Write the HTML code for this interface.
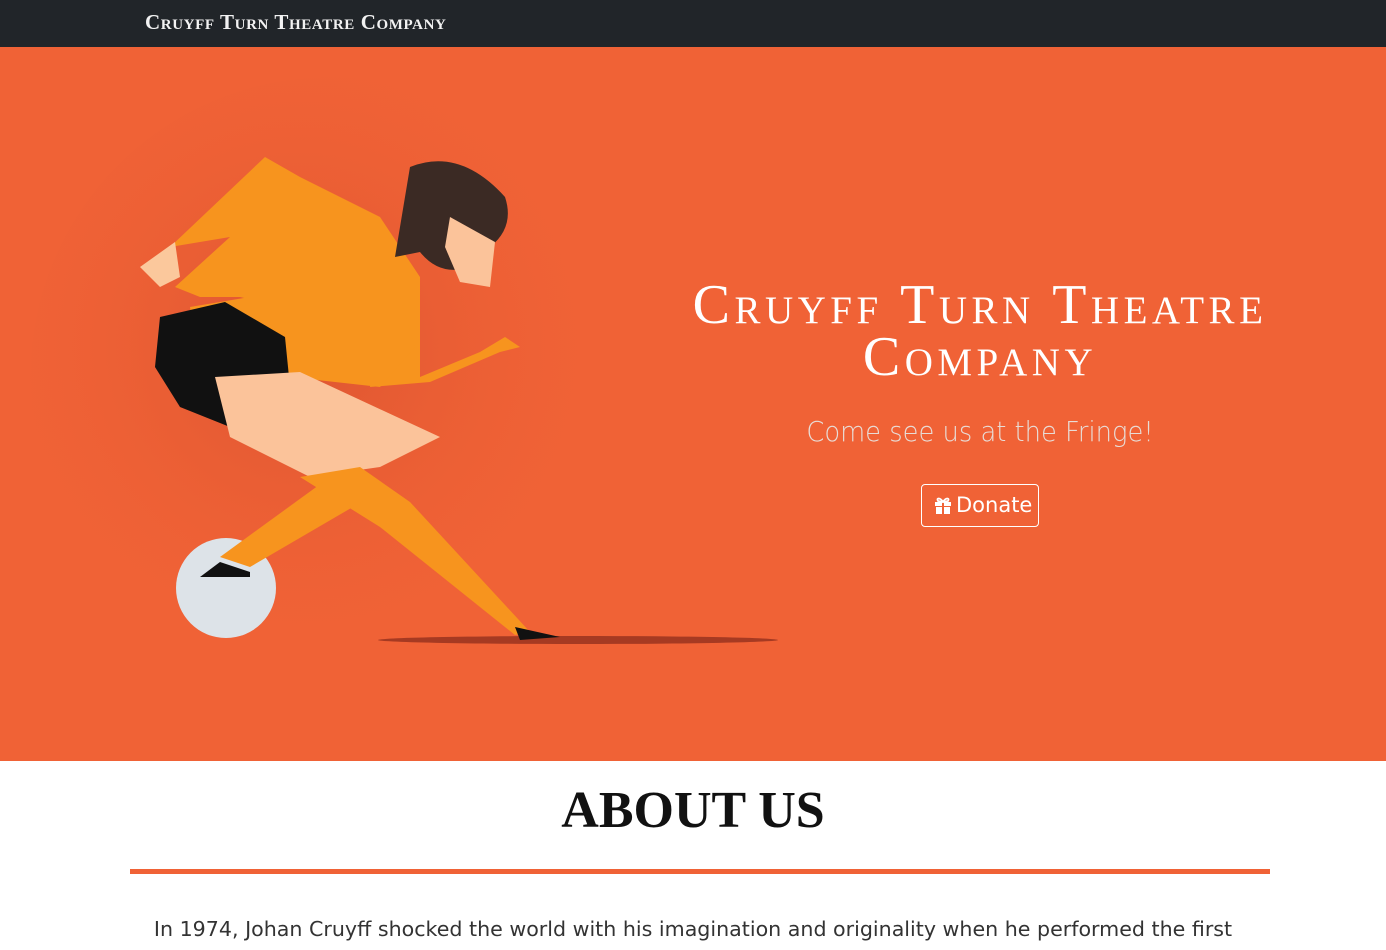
<!DOCTYPE html>
<html><head><meta charset="utf-8"><style>
*{margin:0;padding:0;box-sizing:border-box}
body{width:1386px;height:950px;overflow:hidden;background:#fff;font-family:"Liberation Sans",sans-serif}
.nav{height:47px;background:#212529;position:relative}
.nav span{position:absolute;left:145px;top:10px;color:#f2f2f2;font-family:"Liberation Serif",serif;font-variant:small-caps;font-size:21px;font-weight:bold;letter-spacing:0.6px;white-space:nowrap}
.hero{position:relative;height:714px;background:#f06236;overflow:hidden}
.hero svg.ill{position:absolute;left:0;top:0}
h1{position:absolute;left:630px;width:700px;top:232px;text-align:center;color:#fff;font-family:"Liberation Serif",serif;font-variant:small-caps;font-weight:normal;font-size:56px;line-height:52px;letter-spacing:4.5px}
.sub{position:absolute;left:660px;width:640px;top:368px;text-align:center;color:#e8dcd6;font-size:28px;font-family:"DejaVu Sans","Liberation Sans",sans-serif;font-weight:300;transform:scaleX(0.92)}
.btn{position:absolute;left:921px;top:437px;width:118px;height:43px;border:1px solid #fff;border-radius:4px;color:#fff;font-size:21px;line-height:41px;font-family:"DejaVu Sans","Liberation Sans",sans-serif;padding-left:12px;white-space:nowrap}
.btn svg{vertical-align:-2px;margin-right:4px}
h2{text-align:center;font-family:"Liberation Serif",serif;font-size:52px;font-weight:bold;margin-top:22px;letter-spacing:0;color:#111;line-height:56px}
.rule{margin:30px 116px 0 130px;height:5px;background:#f06236}
p{text-align:center;font-size:20.6px;color:#333;margin-top:43px;font-family:"DejaVu Sans",sans-serif;white-space:nowrap}
</style></head><body>
<div class="nav"><span>Cruyff Turn Theatre Company</span></div>
<div class="hero">
<svg class="ill" width="800" height="714" viewBox="0 0 800 714">
<defs><radialGradient id="g" cx="0.45" cy="0.45" r="0.55"><stop offset="0" stop-color="#c9482a" stop-opacity="0.5"/><stop offset="1" stop-color="#f06236" stop-opacity="0"/></radialGradient></defs>
<ellipse cx="330" cy="330" rx="300" ry="300" fill="url(#g)"/>
<ellipse cx="578" cy="593" rx="200" ry="4" fill="#a63a22"/>
<circle cx="226" cy="541" r="50" fill="#dde3e8"/>
<path d="M170 200 L265 110 L300 130 L380 170 L420 230 L420 330 L480 305 L505 290 L520 300 L500 305 L430 335 L370 340 L380 280 L325 270 L240 250 L200 250 L175 240 L230 190 Z" fill="#f7941e"/>
<path d="M140 220 L175 195 L180 230 L160 240 Z" fill="#fbc89c"/>
<path d="M190 260 L280 245 L400 250 L415 300 L380 340 L200 320 Z" fill="#f7941e"/>
<path d="M160 270 L225 255 L285 290 L290 340 L230 380 L180 360 L155 320 Z" fill="#111"/>
<path d="M215 330 L300 325 L440 390 L380 420 L310 430 L230 390 Z" fill="#fbc39a"/>
<path d="M300 430 L360 420 L410 455 L530 585 L515 588 L380 480 Z" fill="#f7941e"/>
<path d="M220 510 L330 430 L370 450 L250 520 Z" fill="#f7941e"/>
<path d="M200 530 L220 515 L250 525 L250 530 L205 530 Z" fill="#111"/>
<path d="M515 580 L560 590 L520 593 Z" fill="#111"/>
<path d="M410 120 Q460 100 505 150 Q515 180 490 200 L470 220 Q440 230 420 205 L395 210 Z" fill="#3b2a24"/>
<path d="M450 170 L495 195 L490 240 L460 235 L445 200 Z" fill="#fbc39a"/>
</svg>
<h1>Cruyff Turn Theatre<br>Company</h1>
<div class="sub">Come see us at the Fringe!</div>
<div class="btn"><svg width="18" height="17" viewBox="0 0 18 17"><path d="M1 5h16v4H1z M2 10h14v7H2z" fill="#fff"/><rect x="8" y="5" width="2" height="12" fill="#f06236"/><path d="M9 5 C6 0 2 1 4 4 Z M9 5 C12 0 16 1 14 4 Z" fill="none" stroke="#fff" stroke-width="1.8"/></svg>Donate</div>
</div>
<h2>ABOUT US</h2>
<div class="rule"></div>
<p>In 1974, Johan Cruyff shocked the world with his imagination and originality when he performed the first</p>
</body></html>
